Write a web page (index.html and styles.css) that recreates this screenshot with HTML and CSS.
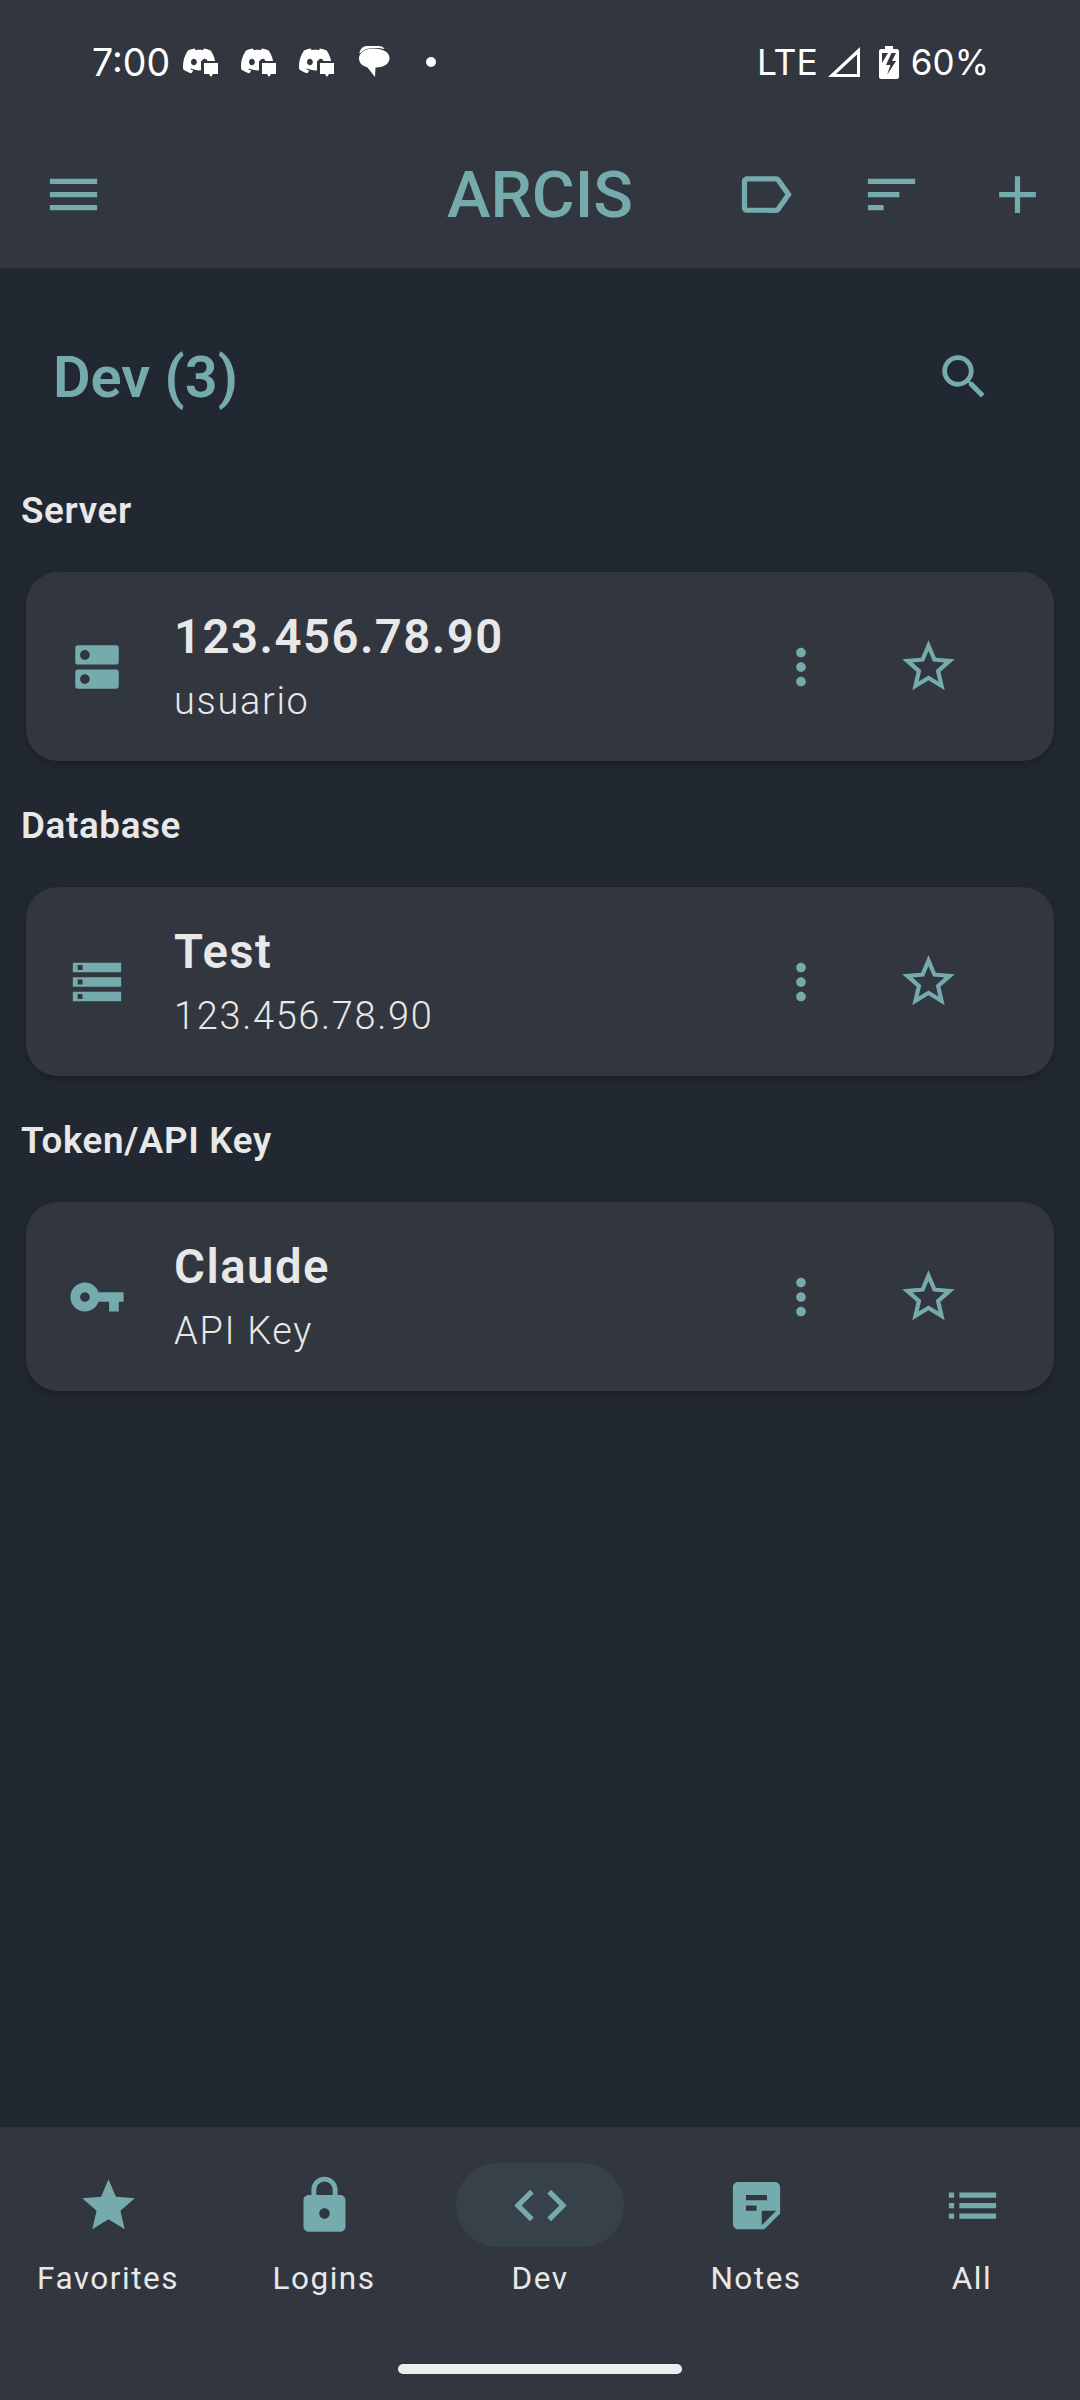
FILE: index.html
```html
<!DOCTYPE html>
<html lang="en">
<head>
<meta charset="utf-8">
<title>ARCIS</title>
<link rel="stylesheet" href="styles.css">
</head>
<body>
<svg class="defs" width="0" height="0" aria-hidden="true">
  <defs>
    <path id="discord" d="M20.317 4.3698a19.7913 19.7913 0 00-4.8851-1.5152.0741.0741 0 00-.0785.0371c-.211.3753-.4447.8648-.6083 1.2495-1.8447-.2762-3.68-.2762-5.4868 0-.1636-.3933-.4058-.8742-.6177-1.2495a.077.077 0 00-.0785-.037 19.7363 19.7363 0 00-4.8852 1.515.0699.0699 0 00-.0321.0277C.5334 9.0458-.319 13.5799.0992 18.0578a.0824.0824 0 00.0312.0561c2.0528 1.5076 4.0413 2.4228 5.9929 3.0294a.0777.0777 0 00.0842-.0276c.4616-.6304.8731-1.2952 1.226-1.9942a.076.076 0 00-.0416-.1057c-.6528-.2476-1.2743-.5495-1.8722-.8923a.077.077 0 01-.0076-.1277c.1258-.0943.2517-.1923.3718-.2914a.0743.0743 0 01.0776-.0105c3.9278 1.7933 8.18 1.7933 12.0614 0a.0739.0739 0 01.0785.0095c.1202.099.246.1981.3728.2924a.077.077 0 01-.0066.1276 12.2986 12.2986 0 01-1.873.8914.0766.0766 0 00-.0407.1067c.3604.698.7719 1.3628 1.225 1.9932a.076.076 0 00.0842.0286c1.961-.6067 3.9495-1.5219 6.0023-3.0294a.077.077 0 00.0313-.0552c.5004-5.177-.8382-9.6739-3.5485-13.6604a.061.061 0 00-.0312-.0286zM8.02 15.3312c-1.1825 0-2.1569-1.0857-2.1569-2.419 0-1.3332.9555-2.4189 2.157-2.4189 1.2108 0 2.1757 1.0952 2.1568 2.419 0 1.3332-.9555 2.4189-2.1569 2.4189zm7.9748 0c-1.1825 0-2.1569-1.0857-2.1569-2.419 0-1.3332.9554-2.4189 2.1569-2.4189 1.2108 0 2.1757 1.0952 2.1568 2.419 0 1.3332-.946 2.4189-2.1568 2.4189Z"/>
    <symbol id="notif-discord" viewBox="0 0 36 32">
      <use href="#discord" transform="translate(0 -1.5) scale(1.36)"/>
      <path class="cut" d="M18 15h18v17H18z"/>
      <path d="M21 17h14v11h-5l-2 3-2-3h-5z"/>
    </symbol>
    <symbol id="more" viewBox="0 0 24 24"><path d="M12 8c1.1 0 2-.9 2-2s-.9-2-2-2-2 .9-2 2 .9 2 2 2zm0 2c-1.1 0-2 .9-2 2s.9 2 2 2 2-.9 2-2-.9-2-2-2zm0 6c-1.1 0-2 .9-2 2s.9 2 2 2 2-.9 2-2-.9-2-2-2z"/></symbol>
    <symbol id="star-outline" viewBox="0 0 24 24"><path d="M22 9.24l-7.19-.62L12 2 9.19 8.63 2 9.24l5.46 4.73L5.82 21 12 17.27 18.18 21l-1.63-7.03L22 9.24zM12 15.4l-3.76 2.27 1-4.28-3.32-2.88 4.38-.38L12 6.1l1.71 4.04 4.38.38-3.32 2.88 1 4.28L12 15.4z"/></symbol>
  </defs>
</svg>

<div class="app">
  <header class="top">
    <div class="status">
      <div class="status-left">
        <span class="clock">7:00</span>
        <svg class="ntf"><use href="#notif-discord"/></svg>
        <svg class="ntf"><use href="#notif-discord"/></svg>
        <svg class="ntf"><use href="#notif-discord"/></svg>
        <svg class="ntf-chat" viewBox="0 0 32 32"><path d="M9 0h12c3 0 5 1 6 3-5-1.500-13-1.500-18 0-3 1-5 3-7 5 0-4 3-8 7-8z"/><path d="M16 2.500C25 2.500 32 6 32 12s-6 9.500-13 9.500h-1l-.5 9.500-7.500-9.500C5 20 1.500 17 1.500 12.500 1.500 6.500 8 2.500 16 2.500z"/></svg>
        <span class="dot"></span>
      </div>
      <div class="status-right">
        <span class="lte">LTE</span>
        <svg class="signal" viewBox="0 0 32 30"><path fill-rule="evenodd" d="M32 0v30H0zM29 7.500 8 27h21z"/></svg>
        <svg class="battery" viewBox="0 0 20 33"><path fill-rule="evenodd" d="M6 0h8v3h4c1 0 2 1 2 2v26c0 1-1 2-2 2H2c-1 0-2-1-2-2V5c0-1 1-2 2-2h4zM3 7v10l6-10zm14 0h-4.500L7 19h4.500L8 29l9-14h-4z"/></svg>
        <span class="pct">60%</span>
      </div>
    </div>
    <div class="toolbar">
      <div class="tool-left">
        <button class="icon-btn" type="button" aria-label="Menu"><svg class="i63" viewBox="0 0 24 24"><path d="M3 18h18v-2H3v2zm0-5h18v-2H3v2zm0-7v2h18V6H3z"/></svg></button>
      </div>
      <h1 class="brand">ARCIS</h1>
      <div class="tool-right">
        <button class="icon-btn" type="button" aria-label="Labels"><svg class="i63" viewBox="0 0 24 24"><path d="M17.63 5.84C17.27 5.33 16.67 5 16 5L5 5.01C3.9 5.01 3 5.9 3 7v10c0 1.1.9 1.99 2 1.99L16 19c.67 0 1.27-.33 1.63-.84L22 12l-4.37-6.16zM16 17H5V7h11l3.55 5L16 17z"/></svg></button>
        <button class="icon-btn" type="button" aria-label="Sort"><svg class="i63" viewBox="0 0 24 24"><path d="M3 18h6v-2H3v2zM3 6v2h18V6H3zm0 7h12v-2H3v2z"/></svg></button>
        <button class="icon-btn" type="button" aria-label="Add"><svg class="i63" viewBox="0 0 24 24"><path d="M19 13h-6v6h-2v-6H5v-2h6V5h2v6h6v2z"/></svg></button>
      </div>
    </div>
  </header>

  <main class="content">
    <div class="page-head">
      <h2 class="page-title">Dev (3)</h2>
      <svg class="search" viewBox="0 0 24 24"><path d="M15.500 14h-.79l-.28-.27C15.410 12.590 16 11.110 16 9.500 16 5.910 13.090 3 9.500 3S3 5.910 3 9.500 5.910 16 9.500 16c1.610 0 3.090-.59 4.230-1.570l.27.28v.79l5 4.990L20.490 19l-4.990-5zm-6 0C7.010 14 5 11.990 5 9.500S7.010 5 9.500 5 14 7.010 14 9.500 11.990 14 9.500 14z"/></svg>
    </div>

    <section class="group">
      <h3 class="group-title">Server</h3>
      <article class="card">
        <svg class="kind" viewBox="0 0 24 24"><path d="M20 13H4c-.55 0-1 .45-1 1v6c0 .55.45 1 1 1h16c.55 0 1-.45 1-1v-6c0-.55-.45-1-1-1zM7 19c-1.100 0-2-.9-2-2s.9-2 2-2 2 .9 2 2-.9 2-2 2zM20 3H4c-.55 0-1 .45-1 1v6c0 .55.45 1 1 1h16c.55 0 1-.45 1-1V4c0-.55-.45-1-1-1zM7 9c-1.100 0-2-.9-2-2s.9-2 2-2 2 .9 2 2-.9 2-2 2z"/></svg>
        <div class="card-text">
          <div class="card-title">123.456.78.90</div>
          <div class="card-sub">usuario</div>
        </div>
        <svg class="more"><use href="#more"/></svg>
        <svg class="fav"><use href="#star-outline"/></svg>
      </article>
    </section>

    <section class="group">
      <h3 class="group-title">Database</h3>
      <article class="card">
        <svg class="kind" viewBox="0 0 24 24"><path d="M2 20h20v-4H2v4zm2-3h2v2H4v-2zM2 4v4h20V4H2zm4 3H4V5h2v2zm-4 7h20v-4H2v4zm2-3h2v2H4v-2z"/></svg>
        <div class="card-text">
          <div class="card-title">Test</div>
          <div class="card-sub">123.456.78.90</div>
        </div>
        <svg class="more"><use href="#more"/></svg>
        <svg class="fav"><use href="#star-outline"/></svg>
      </article>
    </section>

    <section class="group">
      <h3 class="group-title">Token/API Key</h3>
      <article class="card">
        <svg class="kind" viewBox="0 0 24 24"><path d="M12.650 10C11.830 7.670 9.610 6 7 6c-3.310 0-6 2.690-6 6s2.690 6 6 6c2.610 0 4.830-1.670 5.650-4H17v4h4v-4h2v-4H12.650zM7 14c-1.100 0-2-.9-2-2s.9-2 2-2 2 .9 2 2-.9 2-2 2z"/></svg>
        <div class="card-text">
          <div class="card-title">Claude</div>
          <div class="card-sub">API Key</div>
        </div>
        <svg class="more"><use href="#more"/></svg>
        <svg class="fav"><use href="#star-outline"/></svg>
      </article>
    </section>
  </main>

  <footer class="bottom">
    <nav class="nav">
      <div class="nav-item">
        <span class="pill"><svg class="i63" viewBox="0 0 24 24"><path d="M12 17.270L18.180 21l-1.640-7.030L22 9.240l-7.190-.61L12 2 9.190 8.630 2 9.240l5.460 4.730L5.820 21z"/></svg></span>
        <span class="nav-label">Favorites</span>
      </div>
      <div class="nav-item">
        <span class="pill"><svg class="i63" viewBox="0 0 24 24"><path d="M18 8h-1V6c0-2.760-2.240-5-5-5S7 3.240 7 6v2H6c-1.100 0-2 .9-2 2v10c0 1.100.9 2 2 2h12c1.100 0 2-.9 2-2V10c0-1.100-.9-2-2-2zm-6 9c-1.100 0-2-.9-2-2s.9-2 2-2 2 .9 2 2-.9 2-2 2zm3.100-9H8.900V6c0-1.710 1.390-3.100 3.100-3.100 1.710 0 3.100 1.390 3.100 3.100v2z"/></svg></span>
        <span class="nav-label">Logins</span>
      </div>
      <div class="nav-item">
        <span class="pill pill-on"><svg class="i63" viewBox="0 0 24 24"><path d="M9.400 16.600L4.800 12l4.600-4.600L8 6l-6 6 6 6 1.400-1.400zm5.200 0l4.600-4.600-4.600-4.600L16 6l6 6-6 6-1.400-1.400z"/></svg></span>
        <span class="nav-label">Dev</span>
      </div>
      <div class="nav-item">
        <span class="pill"><svg class="i63" viewBox="0 0 24 24"><path d="M19 3H4.990C3.890 3 3 3.900 3 5l.01 14c0 1.100.89 2 1.990 2h10l6-6V5c0-1.100-.9-2-2-2zM8 8h8v2H8V8zm4 6H8v-2h4v2zm2 5.500V14h5.500L14 19.500z"/></svg></span>
        <span class="nav-label">Notes</span>
      </div>
      <div class="nav-item">
        <span class="pill"><svg class="i63" viewBox="0 0 24 24"><path d="M3 13h2v-2H3v2zm0 4h2v-2H3v2zm0-8h2V7H3v2zm4 4h14v-2H7v2zm0 4h14v-2H7v2zM7 7v2h14V7H7z"/></svg></span>
        <span class="nav-label">All</span>
      </div>
    </nav>
    <div class="handle"></div>
  </footer>
</div>
</body>
</html>
```
FILE: styles.css
```css
* { box-sizing: border-box; }
html, body { margin: 0; padding: 0; }
body {
  background: #222831;
  color: #eeeeee;
  font-family: Roboto, "Liberation Sans", sans-serif;
}
svg { fill: #76abae; display: block; flex: none; }
.defs { position: absolute; }

.app {
  width: 1080px;
  height: 2400px;
  display: flex;
  flex-direction: column;
  overflow: hidden;
}

/* top */
.top { background: #31363f; height: 268px; }
.status {
  height: 124px;
  padding: 0 91px 0 92px;
  display: flex;
  align-items: center;
  justify-content: space-between;
  color: #fff;
  font-family: Inter, Roboto, sans-serif;
  font-size: 35px;
}
.status svg { fill: #fff; }
.status-left, .status-right { display: flex; align-items: center; }
.clock { width: 91px; font-size: 37.500px; }
.ntf { width: 36px; height: 32px; margin-right: 22px; }
symbol .cut { fill: #31363f; }
.ntf-chat { width: 33px; height: 32px; }
.dot { width: 10px; height: 10px; border-radius: 50%; background: #fff; margin-left: 36px; }
.lte { margin-right: 10px; font-size: 35.500px; }
.signal { width: 32px; height: 30px; }
.battery { width: 20px; height: 33px; margin: 0 12px 0 19px; }

.toolbar {
  height: 140px;
  display: grid;
  grid-template-columns: 1fr auto 1fr;
  align-items: center;
}
.tool-left { display: flex; padding-left: 10px; }
.tool-right { display: flex; justify-content: flex-end; }
.icon-btn {
  width: 126px;
  height: 126px;
  padding: 0;
  border: 0;
  background: none;
  display: flex;
  align-items: center;
  justify-content: center;
}
.i63 { width: 63px; height: 63px; }
.brand {
  margin: 0;
  padding-top: 2px;
  font-size: 65.600px;
  font-weight: 500;
  line-height: 1;
  color: #76abae;
}

/* content */
.content { flex: 1; }
.page-head {
  height: 218px;
  padding: 0 87px 0 53px;
  display: flex;
  align-items: center;
  justify-content: space-between;
}
.page-title {
  margin: 0;
  font-size: 57.750px;
  font-weight: 600;
  color: #76abae;
}
.search { width: 58px; height: 58px; }
.group { padding: 0 26px 0 21px; height: 315px; }
.group-title {
  margin: 0 0 36px;
  height: 50px;
  line-height: 50px;
  font-size: 36.750px;
  font-weight: 600;
  letter-spacing: .65px;
  color: #e8e8e8;
}
.card {
  width: 1028px;
  margin-left: 5px;
  height: 189px;
  border-radius: 32px;
  background: #31363f;
  box-shadow: 0 4px 8px rgba(0, 0, 0, .22);
  display: flex;
  align-items: center;
  padding-left: 42px;
}
.kind { width: 58px; height: 58px; }
.card-text { flex: 1; margin-left: 48px; }
.card-title {
  font-size: 47.250px;
  font-weight: 600;
  line-height: 60px;
  letter-spacing: 1.500px;
  color: #e8e8e8;
}
.card-sub {
  font-size: 37.900px;
  font-weight: 350;
  line-height: 50px;
  margin-top: 9px;
  letter-spacing: 1.700px;
  color: #e8e8e8;
}
.more { width: 58px; height: 58px; }
.fav { width: 63px; height: 63px; margin: 0 94px 0 67px; }

/* bottom */
.bottom { background: #31363f; height: 273px; padding-top: 36px; }
.nav { display: flex; }
.nav-item {
  flex: 1;
  display: flex;
  flex-direction: column;
  align-items: center;
}
.pill {
  width: 168px;
  height: 84px;
  border-radius: 42px;
  display: flex;
  align-items: center;
  justify-content: center;
}
.pill-on { background: #374149; }
.nav-label {
  margin-top: 12px;
  font-size: 31.500px;
  font-weight: 400;
  line-height: 40px;
  letter-spacing: 1.500px;
  color: #e8e8e8;
}
.handle {
  width: 284px;
  height: 10px;
  border-radius: 5px;
  background: #eeeeee;
  margin: 65px auto 0;
}
```
